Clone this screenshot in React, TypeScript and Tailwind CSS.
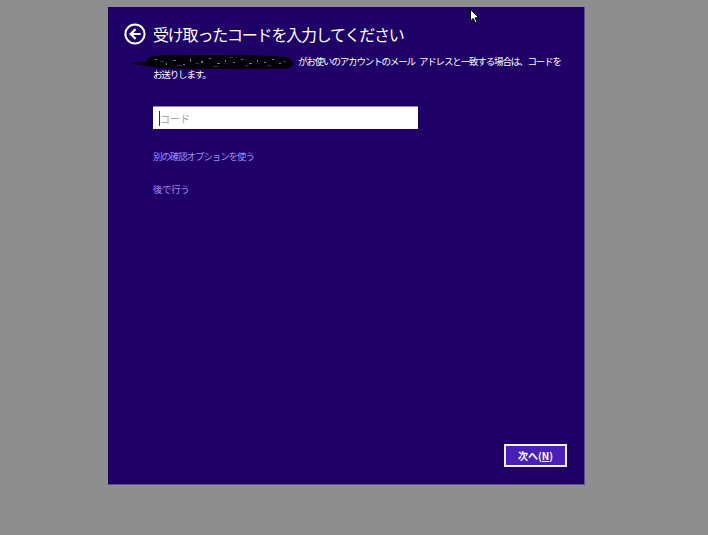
import React from 'react'

const jp = '"Noto Sans CJK JP", "Noto Sans", sans-serif'

function BackIcon() {
  return (
    <svg width="22" height="22" viewBox="0 0 22 22" aria-hidden="true">
      <circle cx="11" cy="11" r="9.6" fill="none" stroke="white" strokeWidth="2" />
      <path d="M15.5 11H7.2M10.8 6.9L6.7 11l4.1 4.1" fill="none" stroke="white" strokeWidth="2.2" strokeLinecap="square" />
    </svg>
  )
}

// redacted email address, scribbled over with a marker
function Scribble() {
  return (
    <svg width="162" height="16" viewBox="0 0 162 16" className="block" aria-hidden="true">
      <path
        d="M0 9 C4 8 8 9 13 8 C14 3 20 1 30 1.5 C60 0.5 95 1 125 1.5 C140 2 152 2 157 5 C162 8 161 13 154 14.5 C130 15.5 95 15 60 15 C40 15 26 14.5 15 12 C10 11 5 11 0 10 Z"
        fill="#040208"
      />
      <g fill="#7a7490">
        <rect x="22" y="5" width="2" height="1" />
        <rect x="33" y="9" width="1" height="2" />
        <rect x="40" y="6" width="3" height="1" />
        <rect x="50" y="10" width="2" height="1" />
        <rect x="57" y="5" width="1" height="3" />
        <rect x="68" y="7" width="2" height="2" />
        <rect x="76" y="4" width="2" height="1" />
        <rect x="84" y="9" width="3" height="1" />
        <rect x="92" y="6" width="1" height="2" />
        <rect x="100" y="8" width="2" height="1" />
        <rect x="108" y="5" width="2" height="1" />
        <rect x="116" y="9" width="3" height="1" />
        <rect x="124" y="6" width="1" height="2" />
        <rect x="131" y="8" width="2" height="1" />
        <rect x="139" y="5" width="2" height="1" />
        <rect x="146" y="9" width="2" height="1" />
      </g>
      <g fill="#35304a">
        <rect x="27" y="7" width="4" height="1" />
        <rect x="45" y="11" width="5" height="1" />
        <rect x="62" y="9" width="4" height="1" />
        <rect x="80" y="12" width="5" height="1" />
        <rect x="96" y="3" width="4" height="1" />
        <rect x="112" y="11" width="4" height="1" />
        <rect x="134" y="11" width="4" height="1" />
        <rect x="150" y="7" width="3" height="1" />
      </g>
    </svg>
  )
}

export default function App() {
  return (
    <div className="h-[535px] w-[708px] overflow-hidden bg-[#8e8e8e] pt-[7px] pl-[108px]" style={{ fontFamily: jp }}>
      <div className="relative flex h-[478px] w-[477px] flex-col border-r border-b border-[#5b4f8c] bg-[#1e0066] pl-[16px] pr-[16px]">
        <div className="mt-[16px] flex items-center gap-[7px]">
          <BackIcon />
          <h1 className="text-[16px] leading-[22px] tracking-[-1.2px] text-white">受け取ったコードを入力してください</h1>
        </div>

        <p className="mt-[10px] pl-[29px] text-[9.5px] leading-[13px] tracking-[-1.15px] text-white">
          <span className="-ml-[20px] mr-[3px] inline-block h-[13px] w-[162px] translate-y-[-1px] align-top">
            <Scribble />
          </span>
          がお使いのアカウントのメール<span className="inline-block w-[4px]" />アドレスと一致する場合は、コードを
          <br />
          お送りします。
        </p>

        <div className="ml-[29px] mt-[25px] flex h-[23px] w-[265px] items-center border-t border-[#8c84c4] bg-white pl-[6px]">
          <span className="h-[15px] w-px bg-[#333]" />
          <span className="text-[10px] text-[#9a9a9a]">コード</span>
        </div>

        <a className="ml-[29px] mt-[20px] block text-[9.5px] leading-[14px] tracking-[-1.1px] text-[#a48cf6]">別の確認オプションを使う</a>
        <a className="ml-[29px] mt-[19px] block text-[9.5px] leading-[14px] tracking-[-0.4px] text-[#a48cf6]">後で行う</a>

        <div className="mt-auto mb-[17px] flex justify-end pr-[1px]">
          <button
            type="button"
            className="flex h-[23px] w-[63px] items-center justify-center border-2 border-[#f2f0fa] bg-[#4a1fb8] text-[10px] font-bold text-white"
          >
            次へ(<span className="underline">N</span>)
          </button>
        </div>

        <svg className="absolute left-[362px] top-[2px]" width="10" height="15" viewBox="0 0 10 15" aria-hidden="true">
          <path d="M0.5 0.5V12L3.2 9.4L5.3 14L7 13.2L5 8.8H8.8Z" fill="white" stroke="black" strokeWidth="1" />
        </svg>
      </div>
    </div>
  )
}
